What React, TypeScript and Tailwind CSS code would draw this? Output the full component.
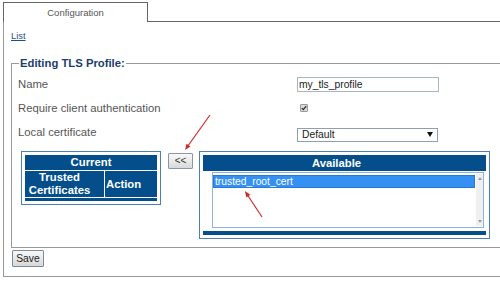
import React from "react";

export default function App() {
  return (
    <div className="relative w-[500px] h-[285px] overflow-hidden bg-white font-['Liberation_Sans',Arial,sans-serif]">
      <div className="pt-[2px] pl-[3px] w-[520px]">
        <div className="flex h-[20px]">
          <div className="w-[145px] border-t border-l border-r border-[#666] flex items-center justify-center text-[9.5px] text-[#555] leading-none">
            Configuration
          </div>
          <div className="flex-1 border-b border-[#666]" />
        </div>
        <div className="border-l border-b border-[#999] pl-[7px] pt-[8px] pb-[9px]">
          <div className="h-[12px] leading-[12px] text-[9.4px]">
            <a className="text-[#1f4f8f] underline">List</a>
          </div>
          <fieldset className="mt-[14px] border border-[#999] pl-[6px] pt-[2px] pb-[8px]">
            <legend className="ml-[1px] px-[1px] text-[11.3px] leading-[14px] font-bold text-[#1b3d6e]">
              Editing TLS Profile:
            </legend>
            <div className="grid grid-cols-[279px_142px] text-[11.3px] text-[#555]">
              <div className="h-[24px] flex items-center">Name</div>
              <div className="h-[24px] flex items-center">
                <input
                  readOnly
                  value="my_tls_profile"
                  className="w-[142px] h-[15px] border border-[#a6b5c8] text-[10.3px] text-[#222] leading-[13px] pl-[1px] outline-none"
                />
              </div>
              <div className="h-[24px] flex items-center">Require client authentication</div>
              <div className="h-[24px] flex items-center">
                <span className="ml-[3px] w-[8px] h-[8px] border border-[#9a9a9a] bg-[#dadada] rounded-[1px] flex items-center justify-center">
                  <svg width="6" height="6" viewBox="0 0 6 6">
                    <path d="M0.8 3.1 L2.3 4.6 L5.2 1.2" stroke="#2a2a2a" strokeWidth="1.3" fill="none" />
                  </svg>
                </span>
              </div>
              <div className="h-[24px] flex items-center">Local certificate</div>
              <div className="h-[24px] flex items-center">
                <div className="mt-[5px] w-[141px] h-[14px] border border-[#8e9fb3] flex items-center justify-between pl-[4px] pr-[4px] text-[10.3px] text-[#222] leading-[12px]">
                  <span>Default</span>
                  <svg width="6" height="5" viewBox="0 0 6 5">
                    <polygon points="0,0 6,0 3,5" fill="#111" />
                  </svg>
                </div>
              </div>
            </div>

            <div className="flex items-start mt-[7px] ml-[3px]">
              <div className="w-[140px] h-[54px] border border-[#4e7fb3] p-[3px] flex flex-col gap-[1px] text-white font-bold text-[11.3px]">
                <div className="h-[15px] bg-[#034e8b] leading-[15px] text-center">Current</div>
                <div className="flex gap-[1px] h-[26px]">
                  <div className="w-[79px] bg-[#034e8b] leading-[13px] text-center pr-[10px]">
                    Trusted
                    <br />
                    Certificates
                  </div>
                  <div className="flex-1 bg-[#034e8b] flex items-center pl-[1px]">Action</div>
                </div>
                <div className="h-[3px] bg-[#034e8b]" />
              </div>

              <div className="ml-[7px] mt-[2px] w-[25px] h-[16px] border border-[#8797a8] rounded-[1px] bg-linear-to-b from-[#fafafa] to-[#d9d9d9] text-[10px] leading-[14px] text-center text-[#333]">
                &lt;&lt;
              </div>

              <div className="ml-[6px] w-[291px] h-[88px] border border-[#4e7fb3] p-[3px] flex flex-col">
                <div className="h-[16px] bg-[#034e8b] leading-[16px] text-center pr-[16px] text-white font-bold text-[11.3px]">
                  Available
                </div>
                <div className="mt-[1px] h-[56px] pl-[9px] pr-[2px]">
                  <div className="h-[56px] border border-[#8fb2dc] flex">
                    <div className="flex-1 pt-[2px]">
                      <div className="h-[13px] bg-[#3590f3] border border-[#2a78d2] text-white text-[10.3px] leading-[11px] pl-[1px]">
                        trusted_root_cert
                      </div>
                    </div>
                    <div className="w-[7px] ml-[1px] my-[1px] bg-[#f0f0f0] flex flex-col justify-between items-center py-[3px]">
                      <svg width="4" height="3" viewBox="0 0 4 3">
                        <polygon points="0,3 4,3 2,0" fill="#999" />
                      </svg>
                      <svg width="4" height="3" viewBox="0 0 4 3">
                        <polygon points="0,0 4,0 2,3" fill="#999" />
                      </svg>
                    </div>
                  </div>
                </div>
                <div className="mt-[3px] h-[4px] bg-[#034e8b]" />
              </div>
            </div>
          </fieldset>
          <div className="mt-[2px] ml-[1px] w-[32px] h-[17px] border border-[#7b8b9c] rounded-[1px] bg-linear-to-b from-[#f8f8f8] to-[#d8d8d8] text-[10.3px] text-[#222] leading-[15px] text-center">
            Save
          </div>
        </div>
      </div>

      <svg className="absolute left-0 top-0 pointer-events-none" width="500" height="285">
        <line x1="210" y1="115" x2="187.5" y2="146.5" stroke="#cc2b2b" strokeWidth="1.2" />
        <polygon points="185,150 190.5,146.6 186.5,143.7" fill="#cc2b2b" />
        <line x1="262" y1="217" x2="247.5" y2="195" stroke="#cc2b2b" strokeWidth="1.2" />
        <polygon points="245,191 250.4,194.7 246.2,197.4" fill="#cc2b2b" />
      </svg>
    </div>
  );
}
